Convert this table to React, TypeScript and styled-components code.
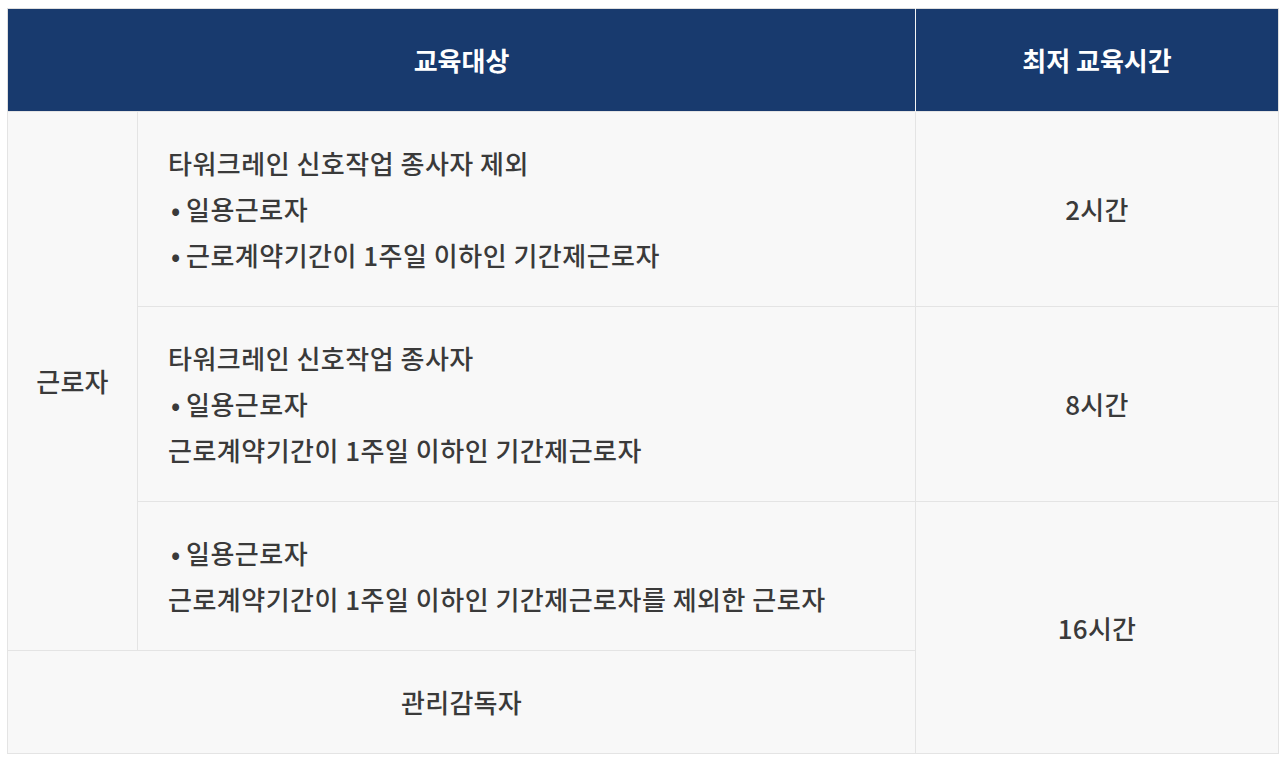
import React from "react";
import styled, { createGlobalStyle } from "styled-components";

const GlobalStyle = createGlobalStyle`
  body {
    margin: 8px 0 0 7px;
    background: #ffffff;
    font-family: "Noto Sans CJK KR", "Noto Sans", sans-serif;
  }
`;

const Table = styled.table`
  width: 1271px;
  border-collapse: collapse;
  table-layout: fixed;
  border: 1px solid #dedede;
  color: #3a3a3a;
  font-size: 26px;
  line-height: 46px;
`;

const Head = styled.th`
  background: #183a6e;
  color: #ffffff;
  font-weight: 700;
  height: 102px;
  padding: 0;
  text-align: center;
  border-right: 1px solid #f4f4f4;
  &:last-child {
    border-right: none;
  }
`;

const Cell = styled.td<{ $align?: "left" | "center" }>`
  background: #f8f8f8;
  border: 1px solid #e4e4e4;
  padding: 28px ${(p) => (p.$align === "left" ? "30px" : "0")};
  text-align: ${(p) => p.$align ?? "center"};
  vertical-align: middle;
  font-weight: 500;
  letter-spacing: ${(p) => (p.$align === "left" ? "0.5px" : "0.3px")};
`;

const Line = styled.div``;

const Bullet = styled.span`
  display: inline-block;
  width: 16px;
  text-align: center;
  margin-right: 2px;
`;

const rows = [
  {
    lines: ["타워크레인 신호작업 종사자 제외", "• 일용근로자", "• 근로계약기간이 1주일 이하인 기간제근로자"],
    time: "2시간",
  },
  {
    lines: ["타워크레인 신호작업 종사자", "• 일용근로자", "근로계약기간이 1주일 이하인 기간제근로자"],
    time: "8시간",
  },
  {
    lines: ["• 일용근로자", "근로계약기간이 1주일 이하인 기간제근로자를 제외한 근로자"],
    time: "16시간",
  },
];

const renderLine = (l: string) =>
  l.startsWith("• ") ? (
    <>
      <Bullet>•</Bullet>
      {l.slice(2)}
    </>
  ) : (
    l
  );

export default function App() {
  return (
    <>
      <GlobalStyle />
      <Table>
        <colgroup>
          <col style={{ width: 130 }} />
          <col style={{ width: 778 }} />
          <col style={{ width: 363 }} />
        </colgroup>
        <thead>
          <tr>
            <Head colSpan={2}>교육대상</Head>
            <Head>최저 교육시간</Head>
          </tr>
        </thead>
        <tbody>
          {rows.map((r, i) => (
            <tr key={i}>
              {i === 0 && <Cell rowSpan={3}>근로자</Cell>}
              <Cell $align="left">
                {r.lines.map((l) => (
                  <Line key={l}>{renderLine(l)}</Line>
                ))}
              </Cell>
              {i < 2 && <Cell>{r.time}</Cell>}
              {i === 2 && <Cell rowSpan={2}>{r.time}</Cell>}
            </tr>
          ))}
          <tr>
            <Cell colSpan={2}>관리감독자</Cell>
          </tr>
        </tbody>
      </Table>
    </>
  );
}
